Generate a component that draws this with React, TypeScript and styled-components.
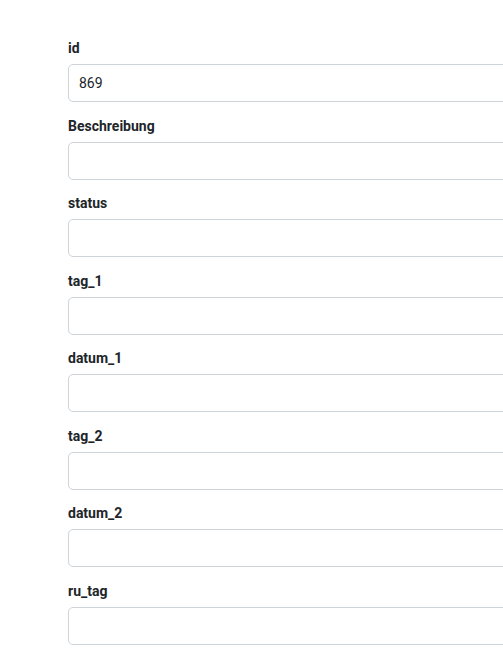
import React from "react";
import styled, { createGlobalStyle } from "styled-components";

const GlobalStyle = createGlobalStyle`
  html, body {
    margin: 0;
    padding: 0;
    background: #ffffff;
    overflow: hidden;
  }
  body {
    font-family: Roboto, "Liberation Sans", Arial, sans-serif;
    color: #212529;
  }
  * {
    box-sizing: border-box;
  }
`;

const PageWrapper = styled.div`
  width: 100vw;
  height: 100vh;
  overflow: hidden;
`;

const FormArea = styled.form`
  width: 560px;
  padding: 38px 0 0 68px;
  display: flex;
  flex-direction: column;
`;

const FieldGroup = styled.div`
  display: flex;
  flex-direction: column;
  margin-bottom: 13.5px;
`;

const FieldLabel = styled.label`
  font-weight: 700;
  font-size: 14px;
  line-height: 21px;
  color: #212529;
  margin-bottom: 5px;
`;

const FieldInput = styled.input`
  width: 100%;
  height: 38px;
  padding: 0 10px;
  border: 1px solid #ced4da;
  border-radius: 5px;
  font-family: Roboto, "Liberation Sans", Arial, sans-serif;
  font-size: 14px;
  color: #212529;
  background: #ffffff;
  outline: none;
`;

const fields = [
  ["id", "869"],
  ["Beschreibung", ""],
  ["status", ""],
  ["tag_1", ""],
  ["datum_1", ""],
  ["tag_2", ""],
  ["datum_2", ""],
  ["ru_tag", ""],
];

const App = () => {
  return (
    <>
      <GlobalStyle />
      <PageWrapper>
        <FormArea>
          {fields.map((field, index) => (
            <FieldGroup key={index}>
              <FieldLabel htmlFor={field[0]}>{field[0]}</FieldLabel>
              <FieldInput id={field[0]} defaultValue={field[1]} />
            </FieldGroup>
          ))}
        </FormArea>
      </PageWrapper>
    </>
  );
};
export default App;
